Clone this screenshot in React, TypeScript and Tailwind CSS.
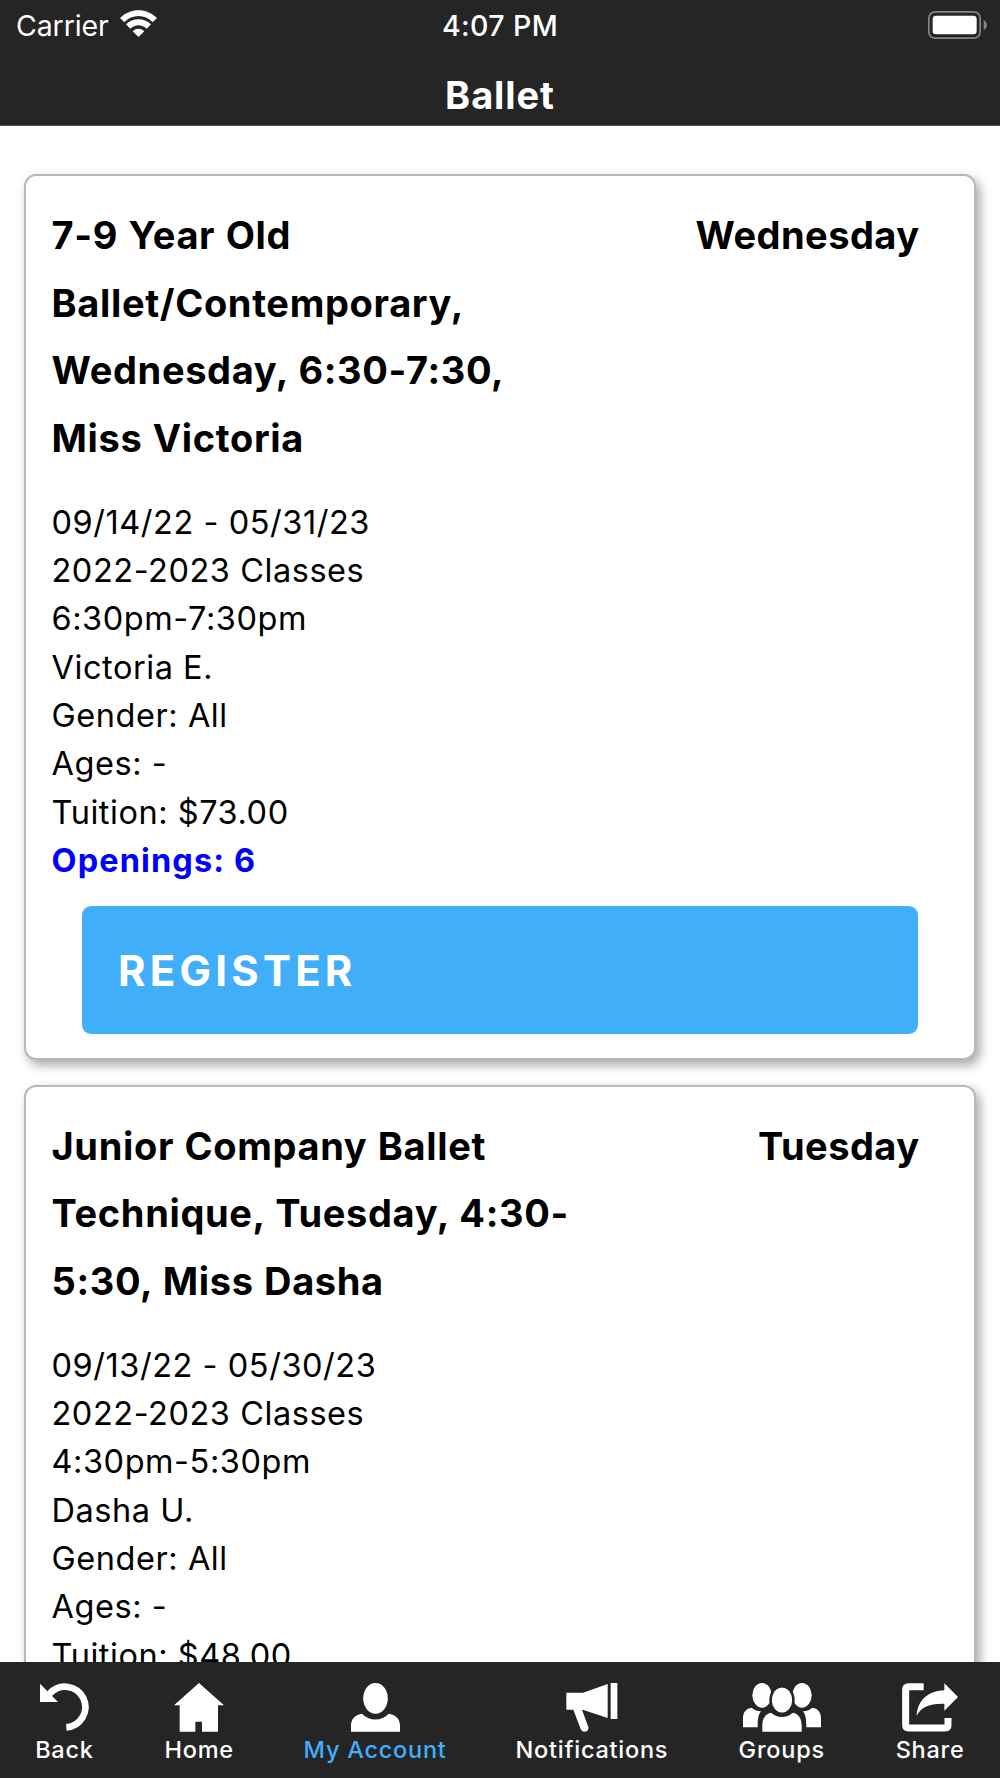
import type { ReactNode } from "react";

const classes = [
  {
    title: ["7-9 Year Old", "Ballet/Contemporary,", "Wednesday, 6:30-7:30,", "Miss Victoria"],
    day: "Wednesday",
    details: [
      "09/14/22 - 05/31/23",
      "2022-2023 Classes",
      "6:30pm-7:30pm",
      "Victoria E.",
      "Gender: All",
      "Ages: -",
      "Tuition: $73.00",
    ],
    openings: 6,
  },
  {
    title: ["Junior Company Ballet", "Technique, Tuesday, 4:30-", "5:30, Miss Dasha"],
    day: "Tuesday",
    details: [
      "09/13/22 - 05/30/23",
      "2022-2023 Classes",
      "4:30pm-5:30pm",
      "Dasha U.",
      "Gender: All",
      "Ages: -",
      "Tuition: $48.00",
    ],
    openings: 0,
  },
];

function WifiIcon() {
  return (
    <svg className="mb-[5px] h-[27px] w-[37px]" viewBox="0 0 111 81" fill="#fff">
      <path d="M0 24C32-7 79-7 111 24L98 37C75 12 36 12 13 37Z" />
      <path d="M18 43C40 23 71 23 93 43L80 56C66 42 45 42 31 56Z" />
      <path d="M38 64C48 54 63 54 73 64L55.500 81Z" />
    </svg>
  );
}

function BatteryIcon() {
  return (
    <svg className="mb-[3px] h-7 w-[60px]" viewBox="0 0 180 84" fill="none">
      <rect x="2.500" y="2.500" width="154" height="79" rx="19" stroke="#858585" strokeWidth="5" />
      <rect x="14" y="14" width="132" height="56" rx="10" fill="#fff" />
      <path d="M167 27C180 34 180 50 167 57Z" fill="#858585" />
    </svg>
  );
}

function BackIcon() {
  return (
    <svg className="h-[49px] w-[49px]" viewBox="0 0 147 147">
      <path d="M24 37L30 31A61 61 0 1 1 79 133" fill="none" stroke="#fff" strokeWidth="20" />
      <path d="M0 2V57H54Z" fill="#fff" />
    </svg>
  );
}

function HomeIcon() {
  return (
    <svg className="h-[49px] w-[50px]" viewBox="0 0 150 147" fill="#fff">
      <path d="M75 0L150 67H132V146H84V116H64V146H17V67H0Z" />
    </svg>
  );
}

function AccountIcon() {
  return (
    <svg className="h-[49px] w-[49px]" viewBox="0 0 147 147" fill="#fff">
      <ellipse cx="73.500" cy="46" rx="37" ry="46" />
      <path d="M0 146V127C0 108 14 94 33 92C54 115 93 115 113 92C133 94 147 108 147 127V146Z" />
    </svg>
  );
}

function MegaphoneIcon() {
  return (
    <svg className="h-[49px] w-[52px]" viewBox="0 0 156 147" fill="#fff">
      <path d="M1 29H51L125 3V105L50 80H48L67 132C69 143 61 146 55 146C49 146 46 142 44 138L22 80H1Z" />
      <path d="M134 0H154V108H134Z" />
    </svg>
  );
}

function GroupsIcon() {
  return (
    <svg className="h-[49px] w-[78px]" viewBox="0 0 234 147" fill="#fff">
      <ellipse cx="57" cy="37" rx="29" ry="37" />
      <ellipse cx="177" cy="37" rx="29" ry="37" />
      <path d="M0 133V105C0 87 10 76 26 74C36 82 43 84 54 85C47 94 44 104 44 133Z" />
      <path d="M234 133V105C234 87 224 76 208 74C198 82 191 84 180 85C187 94 190 104 190 133Z" />
      <g stroke="#252525" strokeWidth="16" paintOrder="stroke">
        <ellipse cx="117" cy="51" rx="30" ry="37" />
        <path d="M58 146V126C58 106 68 92 84 89C103 106 131 106 150 89C166 92 176 106 176 126V146Z" />
      </g>
      <ellipse cx="117" cy="51" rx="30" ry="37" />
    </svg>
  );
}

function ShareIcon() {
  return (
    <svg className="h-[49px] w-[56px]" viewBox="0 0 168 147" fill="none">
      <path d="M65 11H20Q11 11 11 20V126Q11 135 20 135H129Q138 135 138 126V105" stroke="#fff" strokeWidth="21" />
      <path d="M127 1L168 42L127 83V62C80 61 57 73 44 98C46 55 75 24 127 22Z" fill="#fff" />
    </svg>
  );
}

const tabs = [
  { label: "Back", icon: <BackIcon />, width: "w-[57px]", color: "text-white" },
  { label: "Home", icon: <HomeIcon />, width: "w-[69px]", color: "text-white" },
  { label: "My Account", icon: <AccountIcon />, width: "w-[139px]", color: "text-[#41aefa]" },
  { label: "Notifications", icon: <MegaphoneIcon />, width: "w-[151px]", color: "text-white" },
  { label: "Groups", icon: <GroupsIcon />, width: "w-[85px]", color: "text-white" },
  { label: "Share", icon: <ShareIcon />, width: "w-[68px]", color: "text-white" },
];

function Heading({ children, className }: { children: ReactNode; className: string }) {
  return (
    <h2 className={`text-[38px] leading-[67.7px] font-bold whitespace-nowrap ${className}`}>
      {children}
    </h2>
  );
}

function ClassCard({ item }: { item: (typeof classes)[number] }) {
  return (
    <article className="shrink-0 rounded-[12px] border-2 border-[#b8b8b8] bg-white pt-[26px] pb-[24px] shadow-[4px_5px_11px_rgba(0,0,0,0.35)]">
      <div className="flex items-start justify-between pr-[54px] pl-[25.500px]">
        <Heading className="tracking-[0.65px] [word-spacing:0.8px]">
          {item.title.map((line) => (
            <span key={line} className="block">{line}</span>
          ))}
        </Heading>
        <Heading className="tracking-[0.45px]">{item.day}</Heading>
      </div>
      <div className="mt-[26px] pl-[25.500px] text-[32.500px] leading-[48.3px] tracking-[0.55px]">
        {item.details.map((line) => (
          <p key={line}>{line}</p>
        ))}
        {item.openings > 0 && (
          <p className="font-bold tracking-[1.1px] text-[#0000ff]">Openings: {item.openings}</p>
        )}
      </div>
      {item.openings > 0 && (
        <button className="mt-[21px] ml-[56px] flex h-32 w-[836px] items-center rounded-[9px] bg-[#41aefa] pl-9 text-[42px] font-bold tracking-[4.2px] text-white">
          REGISTER
        </button>
      )}
    </article>
  );
}

export default function App() {
  return (
    <div className="flex h-[1778px] w-[1000px] flex-col overflow-hidden bg-white font-['Inter',sans-serif] text-black antialiased">
      <header className="h-[126px] shrink-0 border-b border-[#555] bg-[#252525] text-white">
        <div className="grid h-[52px] grid-cols-3 items-center px-[12px] text-[28.500px] leading-[52px]">
          <div className="flex items-center gap-[11px] pl-[4px]">
            <span className="tracking-[-0.1px]">Carrier</span>
            <WifiIcon />
          </div>
          <span className="text-center font-medium tracking-[0.4px]">4:07 PM</span>
          <div className="flex justify-end">
            <BatteryIcon />
          </div>
        </div>
        <h1 className="pt-[11px] text-center text-[38px] leading-[64px] font-bold tracking-[0.9px]">Ballet</h1>
      </header>

      <main className="flex min-h-0 flex-1 flex-col gap-[24.500px] overflow-hidden pt-[48px] pr-[24.500px] pl-[24px]">
        {classes.map((item) => (
          <ClassCard key={item.day} item={item} />
        ))}
      </main>

      <nav className="flex h-[116px] shrink-0 justify-around bg-[#252525] pt-[21px]">
        {tabs.map((tab) => (
          <a key={tab.label} className={`flex flex-col items-center ${tab.width} ${tab.color}`}>
            {tab.icon}
            <span className="mt-[2px] text-[23.500px] leading-8 font-medium tracking-[0.75px] whitespace-nowrap">{tab.label}</span>
          </a>
        ))}
      </nav>
    </div>
  );
}
